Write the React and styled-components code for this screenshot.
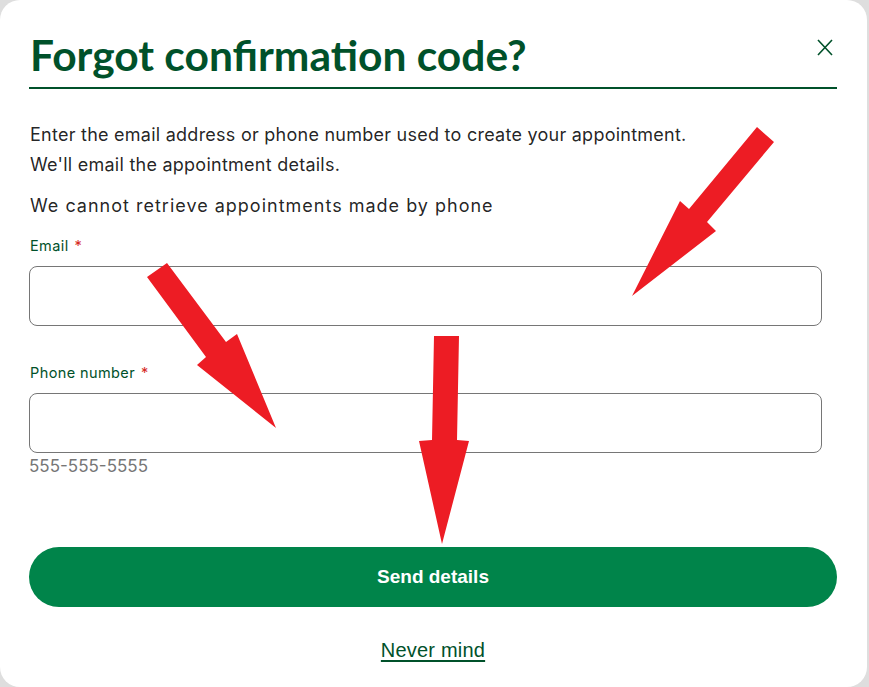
import React from 'react';
import styled, { createGlobalStyle } from 'styled-components';

const GlobalStyle = createGlobalStyle`
  html, body {
    margin: 0;
    padding: 0;
    background: #dedede;
  }

  * {
    box-sizing: border-box;
  }
`;

const Page = styled.div`
  width: 869px;
  height: 687px;
  display: flex;
  overflow: hidden;
`;

const Modal = styled.div`
  position: relative;
  width: 867px;
  height: 687px;
  background: #fff;
  border-radius: 20px;
  padding: 30px 30px 0 29px;
  font-family: Inter, 'Noto Sans', sans-serif;
  color: rgba(0, 0, 0, 0.87);
`;

const Header = styled.div`
  display: flex;
  align-items: flex-start;
  justify-content: space-between;
  padding-bottom: 7px;
  border-bottom: 2px solid #00512a;
`;

const Title = styled.h2`
  margin: 0;
  padding-left: 1px;
  font-family: Lato, Inter, sans-serif;
  font-weight: 700;
  font-size: 42.5px;
  line-height: 50px;
  color: #00512a;
`;

const CloseButton = styled.button`
  display: flex;
  padding: 0;
  margin: 9px 4px 0 0;
  border: 0;
  background: none;
  color: #00512a;
  cursor: pointer;
`;

const Text = styled.p`
  margin: ${p => p.$top}px 0 0 1px;
  font-size: 18px;
  line-height: 30px;
  letter-spacing: ${p => (p.$wide ? '1px' : '0.25px')};
`;

const Field = styled.div`
  display: flex;
  flex-direction: column;
  margin-top: ${p => p.$top}px;
`;

const Label = styled.label`
  font-size: 14.5px;
  line-height: 20px;
  letter-spacing: 0.4px;
  color: #00512a;
  margin-bottom: 10px;
  padding-left: 1px;
`;

const Required = styled.span`
  color: #d62b1f;
  margin-left: 6px;
`;

const Input = styled.input`
  width: 793px;
  height: 60px;
  border: 1px solid #767676;
  border-radius: 8px;
  padding: 0 14px;
  font: inherit;
  font-size: 17px;
  outline: none;
`;

const Hint = styled.span`
  margin-top: 3px;
  font-size: 17px;
  line-height: 20px;
  color: #767676;
`;

const Actions = styled.div`
  display: flex;
  flex-direction: column;
  align-items: center;
  margin-top: 71px;
`;

const PrimaryButton = styled.button`
  width: 100%;
  height: 60px;
  border: 0;
  border-radius: 30px;
  background: #00844a;
  color: #fff;
  font-family: 'Liberation Sans', Arial, sans-serif;
  font-weight: 700;
  font-size: 19px;
  cursor: pointer;
`;

const TextLink = styled.a`
  margin-top: 31px;
  font-family: 'Liberation Sans', Arial, sans-serif;
  font-size: 20px;
  line-height: 24px;
  letter-spacing: 0.2px;
  color: #00512a;
  text-decoration: underline;
  text-underline-offset: 3px;
  text-decoration-thickness: 2px;
  cursor: pointer;
`;

const ArrowLayer = styled.svg`
  position: absolute;
  inset: 0;
  pointer-events: none;
`;

const CloseIcon = () => (
  <svg width="16" height="17" viewBox="0 0 16 17" fill="none" stroke="currentColor" strokeWidth="1.6">
    <path d="M1 1l14 15M15 1L1 16" />
  </svg>
);

const arrows = [
  '757,127 689,209 680,201 632,296 716,231 707,222 774,142',
  '147,277 206,357 197,365 276,428 237,334 226,342 167,263',
  '434,336 432,440 419,441 442,544 469,441 457,440 459,336',
];

const App = () => (
  <>
    <GlobalStyle />
    <Page>
      <Modal>
        <Header>
          <Title>Forgot confirmation code?</Title>
          <CloseButton aria-label="Close">
            <CloseIcon />
          </CloseButton>
        </Header>
        <Text $top={31}>
          Enter the email address or phone number used to create your appointment.
          <br />
          We'll email the appointment details.
        </Text>
        <Text $top={11} $wide>
          We cannot retrieve appointments made by phone
        </Text>
        <Field $top={15}>
          <Label>
            Email<Required>*</Required>
          </Label>
          <Input type="email" />
        </Field>
        <Field $top={37}>
          <Label>
            Phone number<Required>*</Required>
          </Label>
          <Input type="tel" />
          <Hint>555-555-5555</Hint>
        </Field>
        <Actions>
          <PrimaryButton>Send details</PrimaryButton>
          <TextLink>Never mind</TextLink>
        </Actions>
        <ArrowLayer width="867" height="687">
          {arrows.map(points => (
            <polygon key={points} points={points} fill="#ed1c24" />
          ))}
        </ArrowLayer>
      </Modal>
    </Page>
  </>
);

export default App;
